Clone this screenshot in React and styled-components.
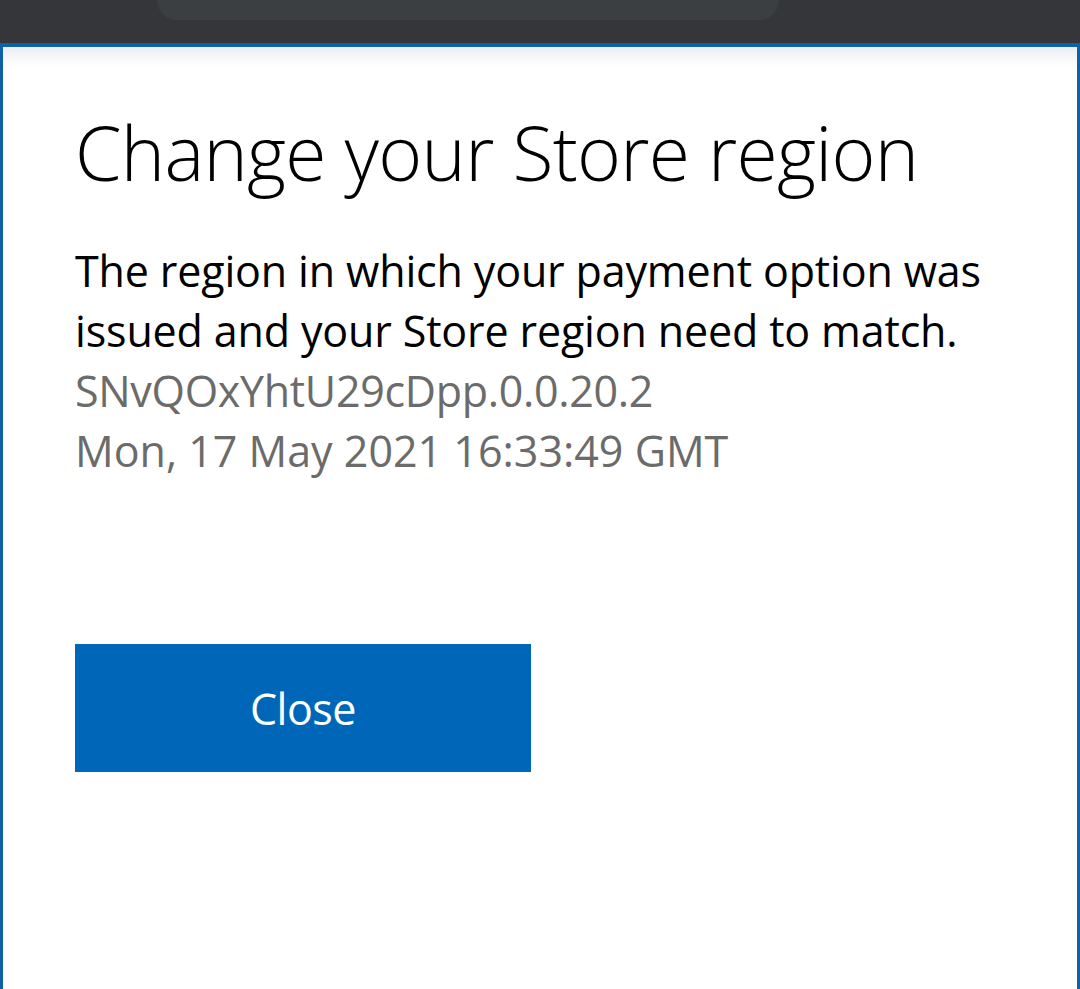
import React from "react";
import styled, { createGlobalStyle } from "styled-components";

const Global = createGlobalStyle`
  html, body { margin: 0; padding: 0; background: #ffffff; }
  body { font-family: "Open Sans", "Noto Sans", sans-serif; }
  #root { height: 989px; }
`;

const Page = styled.div`
  width: 1080px;
  height: 989px;
  display: flex;
  flex-direction: column;
  overflow: hidden;
`;

const TopBar = styled.div`
  height: 43px;
  flex: 0 0 43px;
  background: #35363a;
  padding-left: 157px;
  box-sizing: border-box;
`;

const AddressPill = styled.div`
  width: 622px;
  height: 20px;
  background: #3c3f42;
  border-radius: 0 0 26px 26px;
`;

const Panel = styled.div`
  flex: 1;
  border: 3px solid #0e61a9;
  border-top-width: 4px;
  border-bottom: none;
  background: linear-gradient(#e9edf3 0px, #f7f7f9 10px, #ffffff 20px);
  padding: 0 72px;
  box-sizing: border-box;
`;

const Title = styled.h1`
  margin: 0;
  padding-top: 55px;
  font-family: "Open Sans", "Noto Sans", sans-serif;
  font-weight: 300;
  font-size: 75px;
  line-height: 100px;
  color: #000;
  letter-spacing: -0.7px;
`;

const Body = styled.p`
  margin: 39px 0 0;
  font-size: 43px;
  line-height: 60px;
  color: #000;
  letter-spacing: -0.15px;
`;

const Meta = styled.div`
  font-size: 43px;
  line-height: 60px;
  color: #6b6b6b;
  letter-spacing: ${(p) => p.$tracking ?? "-0.3px"};
`;

const Button = styled.button`
  margin-top: 163px;
  width: 456px;
  height: 128px;
  background: #0067b8;
  border: none;
  color: #fff;
  font-family: "Open Sans", "Noto Sans", sans-serif;
  font-size: 43px;
  padding: 0;
  display: block;
  letter-spacing: -0.5px;
  cursor: pointer;
`;

export default function App() {
  return (
    <>
      <Global />
      <Page>
        <TopBar>
          <AddressPill />
        </TopBar>
        <Panel>
          <Title>Change your Store region</Title>
          <Body>
            The region in which your payment option was issued and your Store
            region need to match.
          </Body>
          <Meta>SNvQOxYhtU29cDpp.0.0.20.2</Meta>
          <Meta $tracking="0px">Mon, 17 May 2021 16:33:49 GMT</Meta>
          <Button>Close</Button>
        </Panel>
      </Page>
    </>
  );
}
